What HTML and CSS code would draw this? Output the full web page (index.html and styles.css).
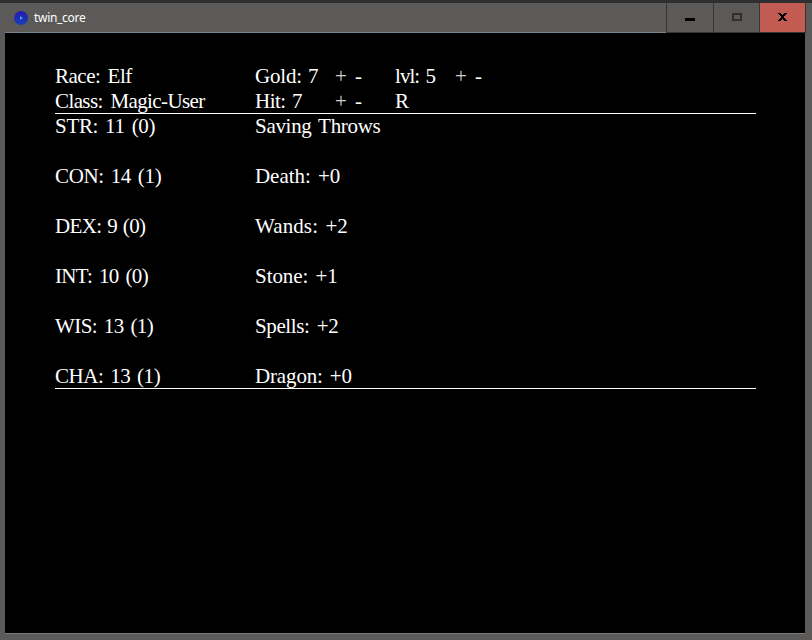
FILE: index.html
```
<!DOCTYPE html>
<html lang="en">
<head>
<meta charset="utf-8">
<title>twin_core</title>
<link rel="stylesheet" href="styles.css">
</head>
<body>
<div class="window">
  <header class="titlebar">
    <div class="caption">
      <svg class="app-icon" width="14" height="14" viewBox="0 0 14 14"><defs><linearGradient id="g" x2="0" y2="1"><stop stop-color="#2618ad"/><stop offset="1" stop-color="#1741bd"/></linearGradient></defs><circle cx="7" cy="7" r="7" fill="url(#g)"/><path d="M6 5l3 2-3 2z" fill="#459bea"/></svg>
      <span class="title">twin_core</span>
    </div>
    <div class="control"><svg width="46" height="29" shape-rendering="crispEdges"><path d="M18 15h10v3H18z" fill="#000"/></svg></div>
    <div class="control restore"><svg width="45" height="29" shape-rendering="crispEdges"><path d="M19 11h8v6h-8z" fill="none" stroke="#302f2e" stroke-width="2"/></svg></div>
    <div class="control close"><svg width="45" height="29" shape-rendering="crispEdges"><path d="M18 10h3v1h-3zM24 10h3v1h-3zM19 11h3v1h-3zM23 11h3v1h-3zM20 12h5v1h-5zM21 13h3v2h-3zM20 15h5v1h-5zM19 16h3v1h-3zM23 16h3v1h-3zM18 17h3v1h-3zM24 17h3v1h-3z"/></svg></div>
  </header>
  <main class="client">
    <section class="sheet summary">
      <div class="row"><span class="race">Race: Elf</span><span class="gold">Gold: 7</span><span class="plus">+</span><span>-</span><span class="level">lvl: 5</span><span class="plus">+</span><span>-</span></div>
      <div class="row"><span class="class">Class: Magic-User</span><span class="hit">Hit: 7</span><span class="plus">+</span><span>-</span><span>R</span></div>
    </section>
    <section class="sheet stats">
      <div class="row"><span class="str">STR: 11 (0)</span><span class="heading">Saving Throws</span></div>
      <div class="row"><span class="con">CON: 14 (1)</span><span class="death">Death: +0</span></div>
      <div class="row"><span class="dex">DEX: 9 (0)</span><span class="wands">Wands: +2</span></div>
      <div class="row"><span class="int">INT: 10 (0)</span><span class="stone">Stone: +1</span></div>
      <div class="row"><span class="wis">WIS: 13 (1)</span><span class="spells">Spells: +2</span></div>
      <div class="row"><span class="cha">CHA: 13 (1)</span><span class="dragon">Dragon: +0</span></div>
    </section>
  </main>
</div>
</body>
</html>
```
FILE: styles.css
```
* { box-sizing: border-box; }
body { margin: 0; background: #5b5a58; }
.window { width: 812px; height: 640px; padding: 0 7px 7px 5px; border-top: 3px solid #302f2f; background: #5b5a58; overflow: hidden; }
.titlebar { display: flex; height: 30px; margin-right: -1px; }
.caption { display: flex; align-items: center; gap: 6px; flex: 1; padding-left: 9px; border-bottom: 1px solid #76838e; }
.app-icon { flex: none; }
.title { color: #fff; font: 12px/16px "Noto Sans", sans-serif; letter-spacing: -.3px; padding-top: 1px; }
.control { width: 47px; border-left: 1px solid #363534; border-bottom: 1px solid #363534; }
.restore { width: 46px; }
.close { width: 47px; background: #c25b52; border-right: 1px solid #363534; }
.control svg { display: block; }
.client { height: 601px; background: #000; border-bottom: 1px solid #77797b; padding: 31px 49px 0 50px; color: #fff; font: 21px/25px "Liberation Serif", serif; }
.sheet { border-bottom: 1px solid #fff; }
.row { display: grid; grid-template-columns: 200px 80px 20px 40px 60px 20px 1fr; height: 25px; white-space: pre; word-spacing: 1px; }
.summary { height: 50px; }
.stats { height: 275px; }
.stats .row { height: 50px; grid-template-columns: 200px 1fr; }
.stats .row:last-child { height: 24px; }
.plus { color: #d0d0d0; }
.race { letter-spacing: -.5px; word-spacing: 2.5px; }
.class { letter-spacing: -.6px; word-spacing: 3px; }
.gold { letter-spacing: -.2px; word-spacing: 1px; }
.hit { letter-spacing: -.5px; word-spacing: 1.5px; }
.level { letter-spacing: -.95px; word-spacing: 2px; }
.str { letter-spacing: -.3px; word-spacing: 2px; }
.heading { letter-spacing: -.3px; word-spacing: 2px; }
.con { letter-spacing: -.35px; word-spacing: 2px; }
.dex { letter-spacing: -.6px; word-spacing: 1px; }
.int { letter-spacing: -.65px; word-spacing: 2.2px; }
.wis { letter-spacing: -.55px; word-spacing: 2px; }
.cha { letter-spacing: -.45px; word-spacing: 2px; }
.death { letter-spacing: -.05px; word-spacing: 2px; }
.wands { letter-spacing: .1px; word-spacing: 2px; }
.stone { letter-spacing: -.05px; word-spacing: 2px; }
.spells { letter-spacing: -.4px; word-spacing: 2.5px; }
.dragon { letter-spacing: -.15px; word-spacing: 2px; }
```
